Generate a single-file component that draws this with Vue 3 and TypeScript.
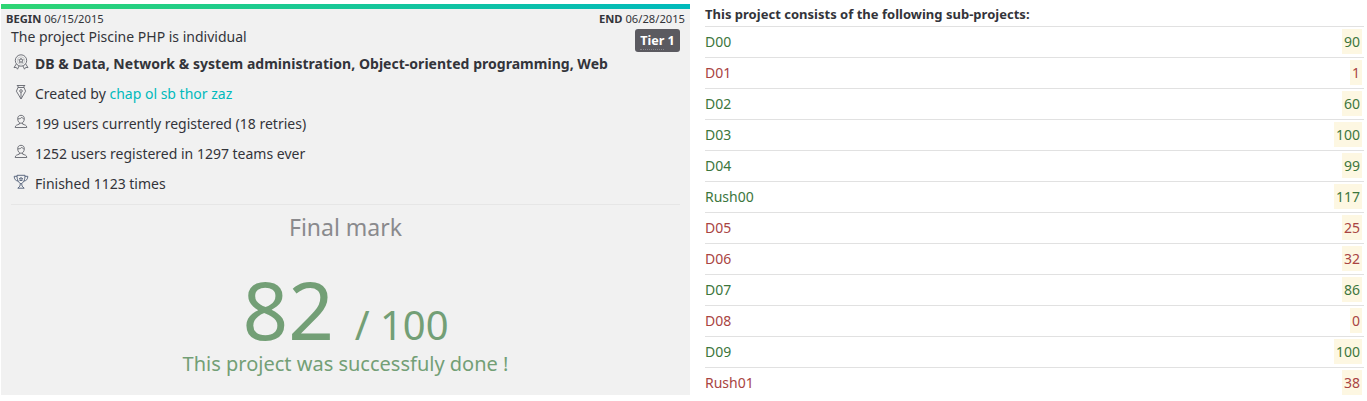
<script setup lang="ts">
interface SubProject {
  name: string
  mark: number
  passed: boolean
}

const subProjects: SubProject[] = [
  { name: 'D00', mark: 90, passed: true },
  { name: 'D01', mark: 1, passed: false },
  { name: 'D02', mark: 60, passed: true },
  { name: 'D03', mark: 100, passed: true },
  { name: 'D04', mark: 99, passed: true },
  { name: 'Rush00', mark: 117, passed: true },
  { name: 'D05', mark: 25, passed: false },
  { name: 'D06', mark: 32, passed: false },
  { name: 'D07', mark: 86, passed: true },
  { name: 'D08', mark: 0, passed: false },
  { name: 'D09', mark: 100, passed: true },
  { name: 'Rush01', mark: 38, passed: false },
]

const authors: string[] = ['chap', 'ol', 'sb', 'thor', 'zaz']
const userLines: string[] = [
  '199 users currently registered (18 retries)',
  '1252 users registered in 1297 teams ever',
]
</script>

<template>
  <main class="page">
    <section class="project">
      <div class="bar"></div>
      <div class="dates">
        <span><b>BEGIN</b> 06/15/2015</span>
        <span><b>END</b> 06/28/2015</span>
      </div>
      <div class="details">
        <div class="intro">
          <span>The project Piscine PHP is individual</span>
          <span class="tier"><span class="tier-word">Tier</span> 1</span>
        </div>
        <ul class="facts">
          <li>
            <svg class="icon" viewBox="0 0 16 16">
              <circle cx="8" cy="6.5" r="5.7" />
              <circle cx="8" cy="6.5" r="3.7" class="faint" />
              <path d="M8 4.2l.7 1.5 1.6.2-1.2 1.1.3 1.6L8 7.8l-1.4.8.3-1.6-1.2-1.1 1.6-.2z" />
              <path d="M3.3 10L1 13.6l2.3-.2 1.2 1.8 1.6-3.3M12.7 10l2.3 3.6-2.3-.2-1.2 1.8-1.6-3.3" />
            </svg>
            <b class="skills">DB &amp; Data, Network &amp; system administration, Object-oriented programming, Web</b>
          </li>
          <li>
            <svg class="icon" viewBox="0 0 16 16">
              <path d="M3.8 1.5h8.4M5 1.5v2h6v-2M5 3.5L3.4 7.2 8 15l4.600-7.800L11 3.500M8 14.500V8.300" />
              <circle cx="8" cy="7" r="1.3" />
            </svg>
            <span>Created by <a v-for="author in authors" :key="author" class="author">{{ author + ' ' }}</a></span>
          </li>
          <li v-for="line in userLines" :key="line">
            <svg class="icon" viewBox="0 0 16 16">
              <path d="M4.7 4.6C4.7 2.5 6 1.3 8 1.3s3.3 1.2 3.3 3.3C11.3 7.2 10 9.3 8 9.3S4.7 7.2 4.7 4.6z" />
              <path d="M4.8 4.8c2 .1 3.2-.4 4-1.5.6 1 1.4 1.4 2.4 1.5M6.4 8.7v1.4c-2 .9-4.2.9-4.2 3.4h11.6c0-2.5-2.2-2.5-4.2-3.4V8.7" />
            </svg>
            <span>{{ line }}</span>
          </li>
          <li>
            <svg class="icon trophy" viewBox="0 0 16 16">
              <path d="M4 1.3h8c0 4.7-1.5 7.7-4 8.4-2.5-.7-4-3.7-4-8.4z" />
              <path d="M4 2.3H1.2c0 3 1.5 4.5 3.8 4.7M12 2.3h2.8c0 3-1.5 4.5-3.8 4.7M7.2 9.7c.2 2-.5 3-2.4 4.5h6.4C9.3 12.7 8.6 11.7 8.8 9.7" />
              <path d="M8 3.3l.5 1.2 1.3.1-1 .9.3 1.3L8 6.1l-1.1.7.3-1.3-1-.9 1.3-.1z" />
            </svg>
            <span>Finished 1123 times</span>
          </li>
        </ul>
        <div class="result">
          <h2 class="caption">Final mark</h2>
          <p class="score">82 <small>/ 100</small></p>
          <p class="message">This project was successfuly done !</p>
        </div>
      </div>
    </section>

    <section class="subs">
      <h4 class="subs-title">This project consists of the following sub-projects:</h4>
      <div
        v-for="sub in subProjects"
        :key="sub.name"
        class="sub"
        :class="sub.passed ? 'passed' : 'failed'"
      >
        <span>{{ sub.name }}</span>
        <span class="mark">{{ sub.mark }}</span>
      </div>
    </section>
  </main>
</template>

<style>
body {
  background: #fff;
  overflow: hidden;
}
</style>

<style scoped>
.page {
  display: flex;
  align-items: flex-start;
  gap: 15px;
  height: 401px;
  box-sizing: border-box;
  padding: 4px 3px 0 1px;
  color: #33343a;
  font: 14px/20px 'Noto Sans', sans-serif;
}

.project {
  width: 689px;
  height: 391px;
  background: #f1f1f1;
}

.bar {
  height: 5px;
  background: linear-gradient(to right, #2ed573, #00babc);
}

.dates {
  display: flex;
  justify-content: space-between;
  padding: 2px 5px 0;
  height: 16px;
  font-size: 11.2px;
  line-height: 16px;
}

.details {
  padding: 0 10px;
}

.intro {
  display: flex;
  justify-content: space-between;
  height: 22px;
}

.tier {
  box-sizing: border-box;
  width: 45px;
  height: 23px;
  margin-top: 2px;
  border-radius: 3px;
  background: #5b5a60;
  color: #fff;
  font-size: 12.6px;
  font-weight: bold;
  line-height: 23px;
  text-align: center;
}

.tier-word {
  display: inline-block;
  height: 21px;
  border-bottom: 1px dotted #85848a;
  box-sizing: border-box;
}

.facts {
  list-style: none;
  margin: 0;
  padding: 0 0 5px;
  border-bottom: 1px solid #e6e6e6;
}

.facts li {
  display: flex;
  align-items: center;
  gap: 6px;
  height: 30px;
  padding-left: 2px;
}

.skills {
  letter-spacing: 0.028px;
}

.icon {
  width: 16px;
  height: 16px;
  margin-top: -4px;
  fill: none;
  stroke: #63656d;
  stroke-width: 0.9;
}

.faint {
  stroke: #a5a6ab;
  stroke-width: 0.5;
}

.trophy {
  stroke: #4e5c76;
}

.author {
  color: #00babc;
}

.result {
  text-align: center;
}

.caption {
  margin: 8px 0 0;
  color: #8a8a8d;
  font-size: 23px;
  font-weight: 400;
  line-height: 28px;
}

.score {
  margin: 27px 0 0;
  height: 82px;
  color: #739f76;
  font-size: 80px;
  line-height: 82px;
}

.score small {
  font-size: 40px;
}

.message {
  margin: 0;
  color: #739f76;
  font-size: 20px;
  line-height: 28px;
}

.subs {
  flex: 1;
}

.subs-title {
  height: 22px;
  margin: 0;
  font-size: 13px;
  line-height: 21px;
  letter-spacing: 0.015px;
}

.sub {
  display: flex;
  justify-content: space-between;
  align-items: center;
  height: 30px;
  padding-right: 2px;
  border-top: 1px solid #e1e1e1;
}

.mark {
  box-sizing: border-box;
  height: 25px;
  margin-top: -1px;
  padding: 1px 2px 0;
  background: #fdf7e2;
  line-height: 24px;
}

.passed {
  color: #3c763d;
}

.failed {
  color: #a94442;
}
</style>
